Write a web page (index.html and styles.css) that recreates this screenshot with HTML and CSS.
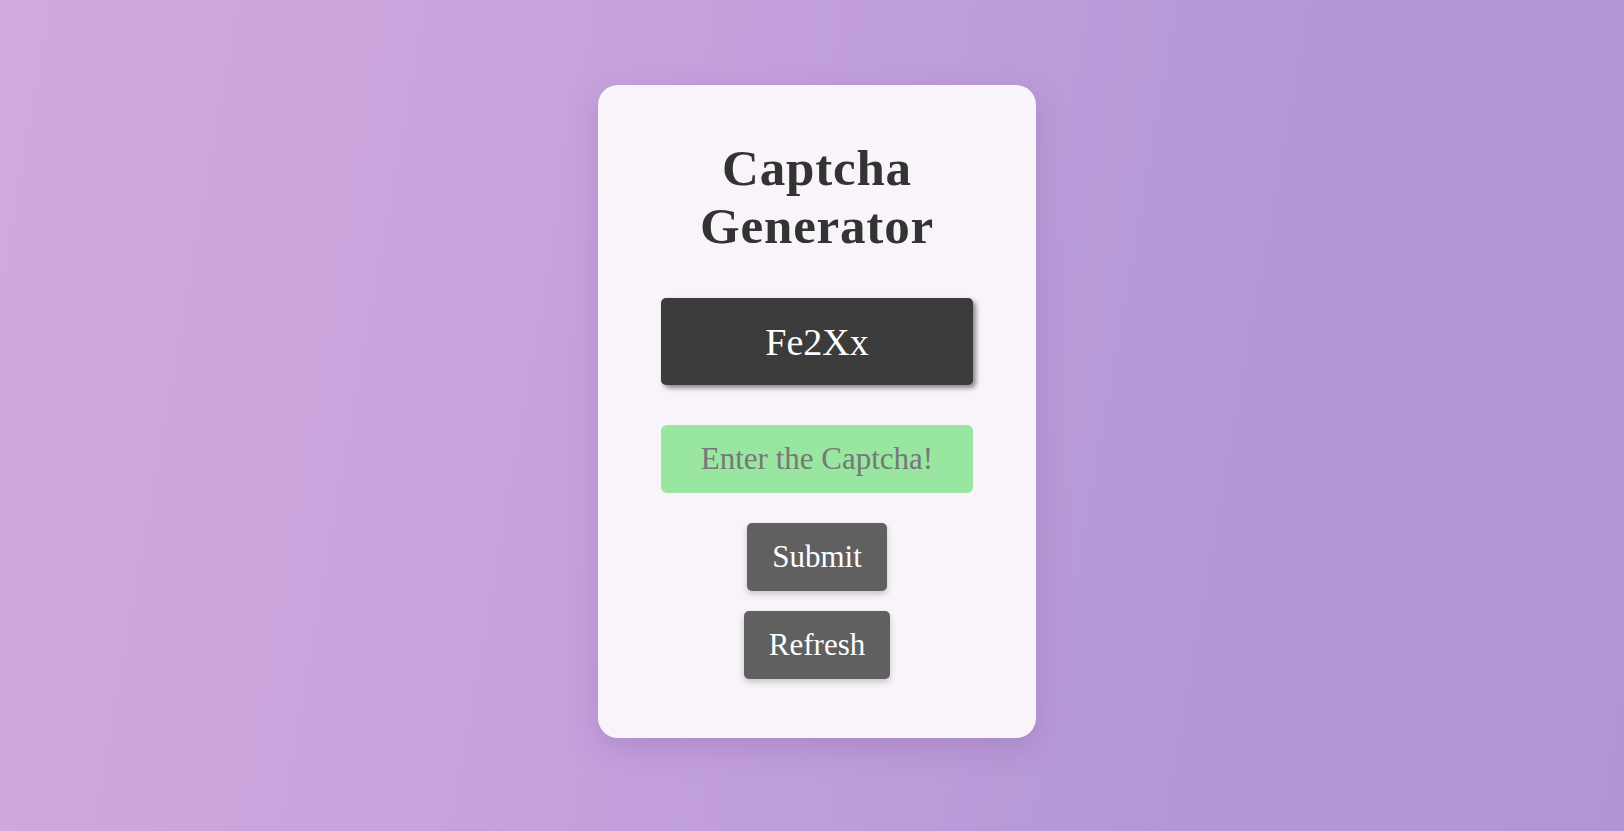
FILE: index.html
```html
<!DOCTYPE html>
<html>
<head>
<meta charset="utf-8">
<link rel="stylesheet" href="styles.css">
</head>
<body>
<div class="card">
  <h1 class="title">Captcha Generator</h1>
  <div class="captcha">Fe2Xx</div>
  <input class="field" type="text" placeholder="Enter the Captcha!">
  <button class="btn btn-submit">Submit</button>
  <button class="btn btn-refresh">Refresh</button>
</div>
</body>
</html>
```
FILE: styles.css
```css
html, body { margin: 0; padding: 0; }
body {
  height: 100vh;
  overflow: hidden;
  box-sizing: border-box;
  padding-left: 10px;
  background: linear-gradient(100deg, #d2a9dd 0%, #c5a1dc 40%, #b497d6 75%, #b196d5 100%);
  font-family: "Liberation Serif", "DejaVu Serif", serif;
  display: flex;
  justify-content: center;
  align-items: flex-start;
}
.card {
  margin-top: 85px;
  width: 438px;
  height: 653px;
  box-sizing: border-box;
  background: #f8f4fa;
  border-radius: 20px;
  box-shadow: 0 10px 30px rgba(120, 80, 150, 0.25);
  display: flex;
  flex-direction: column;
  align-items: center;
  padding-top: 54px;
}
.title {
  margin: 0;
  font-size: 51px;
  line-height: 58px;
  letter-spacing: 0.8px;
  font-weight: bold;
  color: #333;
  text-align: center;
  width: 280px;
}
.captcha {
  margin-top: 43px;
  width: 312px;
  height: 87px;
  box-sizing: border-box;
  background: #3b3b3b;
  border-radius: 5px;
  box-shadow: 3px 3px 5px rgba(0,0,0,0.45);
  color: #fff;
  font-size: 38px;
  display: flex;
  align-items: center;
  justify-content: center;
}
.field {
  margin-top: 40px;
  width: 312px;
  height: 68px;
  box-sizing: border-box;
  border: none;
  outline: none;
  border-radius: 6px;
  background: #98e6a0;
  font-family: inherit;
  font-size: 31px;
  text-align: center;
  color: #333;
}
.field::placeholder { color: #777; }
.btn {
  height: 68px;
  border: none;
  border-radius: 5px;
  background: #606060;
  color: #fff;
  font-family: inherit;
  font-size: 31px;
  padding: 0;
  box-shadow: 0 3px 6px rgba(0,0,0,0.2);
}
.btn-submit { margin-top: 30px; width: 140px; }
.btn-refresh { margin-top: 20px; width: 146px; }
```
